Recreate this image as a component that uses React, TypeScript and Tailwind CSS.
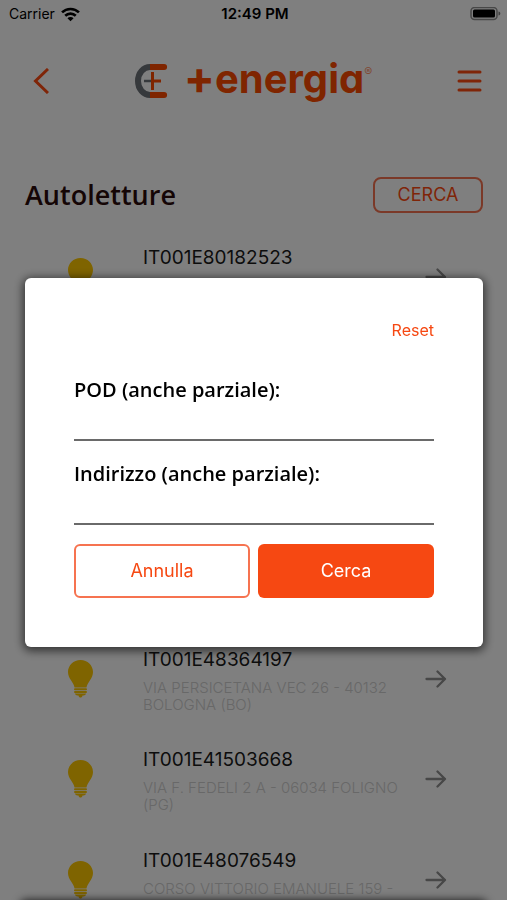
import { useState } from "react";

interface Supply {
  pod: string;
  address?: string;
}

const supplies: Supply[] = [
  { pod: "IT001E80182523" },
  { pod: "IT001E80182524" },
  { pod: "IT001E80182525" },
  { pod: "IT001E80182526" },
  { pod: "IT001E48364197", address: "VIA PERSICETANA VEC 26 - 40132 BOLOGNA (BO)" },
  { pod: "IT001E41503668", address: "VIA F. FEDELI 2 A - 06034 FOLIGNO (PG)" },
  { pod: "IT001E48076549", address: "CORSO VITTORIO EMANUELE 159 -" },
];

const BulbIcon = () => (
  <svg width="25" height="38" viewBox="0 0 25 38" fill="#ffc800">
    <path d="M12.500 0C5.400 0 0 5.500 0 12c0 3.400 1.400 5.700 3 8.300 1.700 2.700 3.200 4.700 3.500 7.200h12c.3-2.500 1.800-4.500 3.500-7.200 1.600-2.600 3-4.900 3-8.300C25 5.500 19.600 0 12.500 0z" />
    <rect x="6" y="28.300" width="13" height="2" rx="1" />
    <rect x="6" y="31" width="13" height="2" rx="1" />
    <path d="M7 33.600h11c0 1.200-1 1.800-2.500 1.800h-1c-.3 1.300-1 2.200-2 2.200s-1.700-.9-2-2.200h-1C8 35.400 7 34.800 7 33.600z" />
  </svg>
);

const ArrowIcon = () => (
  <svg width="22" height="18" viewBox="0 0 22 18" fill="none" stroke="#8f8f8f" strokeWidth="2.300" strokeLinecap="round" strokeLinejoin="round">
    <path d="M1.500 9h18.500M12.500 1.500L20 9l-7.500 7.500" />
  </svg>
);

const StatusBar = () => (
  <div className="grid grid-cols-3 items-center h-7 pl-[9px] pr-1.5 text-black">
    <div className="flex items-center gap-1.5 text-sm">
      <span>Carrier</span>
      <svg width="19" height="15" viewBox="0 0 18 14" fill="none" stroke="#000" strokeWidth="2.500">
        <path d="M1 5a11.500 11.500 0 0 1 16 0M4 8.200a7.200 7.200 0 0 1 10 0" />
        <path d="M9 13.500l-2.900-3a4.100 4.100 0 0 1 5.800 0z" fill="#000" stroke="none" />
      </svg>
    </div>
    <div className="text-center text-[15px] font-semibold">12:49 PM</div>
    <svg className="justify-self-end" width="31" height="15" viewBox="0 0 31 15">
      <rect x="1" y="0.500" width="26" height="12" rx="3.500" fill="none" stroke="#909090" strokeWidth="1.500" />
      <rect x="3" y="2.500" width="22" height="8" rx="1.500" fill="#000" />
      <path d="M28.500 4.500c1.300.3 1.800 1 1.800 2s-.5 1.700-1.800 2z" fill="#808080" />
    </svg>
  </div>
);

const Header = () => (
  <header className="flex items-center justify-between px-[25px] pt-7">
    <button aria-label="Indietro" className="flex justify-center w-8">
      <svg width="16" height="26" viewBox="0 0 16 26" fill="none" stroke="#ff4b11" strokeWidth="3">
        <path d="M15 1L2.500 13 15 25" />
      </svg>
    </button>
    <div className="flex items-center gap-4">
      <svg width="33" height="36" viewBox="0 0 33 36" fill="none" strokeWidth="6">
        <path d="M15 4C8.500 4 3 10 3 18s5.500 14 12 14" stroke="#6d7278" />
        <path d="M29 4h.1M29 32h.1" stroke="#ff4b00" strokeLinecap="round" />
        <path d="M15 4h14M15 32h14" stroke="#ff4b00" />
        <path d="M9 18h7" stroke="#6d7278" strokeWidth="2.500" />
        <path d="M17.500 9v18M17 18h9" stroke="#ff4b00" strokeWidth="3" />
      </svg>
      <div className="flex pb-1 text-[#ff4b00]">
        <span className="text-[46px] leading-[42px] font-bold">+</span>
        <span className="text-[40px] leading-[46px] font-bold [font-feature-settings:'cv11']">energia</span>
        <span className="pt-2 text-xs opacity-60">®</span>
      </div>
    </div>
    <button aria-label="Menu" className="flex justify-end w-8">
      <svg width="25" height="24" viewBox="0 0 25 24" stroke="#ff4b11" strokeWidth="3" strokeLinecap="round">
        <path d="M2 3h21M2 12h21M2 21h21" />
      </svg>
    </button>
  </header>
);

const SupplyRow = ({ pod, address }: Supply) => (
  <li className="flex min-h-[100px] even:min-h-[101px] items-start pl-[68px] pr-[60px]">
    <div className="pt-3">
      <BulbIcon />
    </div>
    <div className="ml-[50px] w-[264px]">
      <h2 className="text-[19px] leading-6 text-[#1a1a1a]">{pod}</h2>
      {address && <p className="mt-[7px] text-[15px] leading-[17px] font-light text-[#d0d0d0]">{address}</p>}
    </div>
    <button aria-label={"Apri " + pod} className="ml-auto pt-[22px]">
      <ArrowIcon />
    </button>
  </li>
);

interface FieldProps {
  id: string;
  label: string;
  value: string;
  onChange: (value: string) => void;
}

const Field = ({ id, label, value, onChange }: FieldProps) => (
  <div className="flex flex-col mb-[19px]">
    <label htmlFor={id} className="font-['Open_Sans',sans-serif] text-xl leading-7 font-[550] text-black">
      {label}
    </label>
    <input
      id={id}
      value={value}
      onChange={(e) => onChange(e.target.value)}
      className="h-[37px] border-b-2 border-[#6a6a6a] outline-none"
    />
  </div>
);

const SearchDialog = () => {
  const [pod, setPod] = useState("");
  const [street, setStreet] = useState("");

  const reset = () => {
    setPod("");
    setStreet("");
  };

  return (
    <div className="fixed inset-0 flex items-center bg-black/50 pl-[25px] pr-6 pt-[25px]">
      <form role="dialog" onSubmit={(e) => e.preventDefault()} className="flex flex-col w-full rounded-md bg-white px-[49px] pt-10 pb-[49px] shadow-[0_2px_10px_2px_rgba(0,0,0,0.6)]">
        <button type="button" onClick={reset} className="self-end mb-[34px] text-base leading-6 text-[#f64812]">
          Reset
        </button>
        <Field id="pod" label="POD (anche parziale):" value={pod} onChange={setPod} />
        <Field id="street" label="Indirizzo (anche parziale):" value={street} onChange={setStreet} />
        <div className="grid grid-cols-2 gap-2">
          <button type="button" className="h-[54px] rounded-md border-2 border-[#f67350] text-lg text-[#f64812]">
            Annulla
          </button>
          <button type="submit" className="h-[54px] rounded-md bg-[#f64812] text-lg text-white">
            Cerca
          </button>
        </div>
      </form>
    </div>
  );
};

export default function App() {
  return (
    <div className="relative h-screen overflow-hidden bg-white font-['Inter',sans-serif]">
      <StatusBar />
      <Header />
      <div className="flex items-center justify-between pl-[25px] pr-6 pt-[71px]">
        <h1 className="font-['Open_Sans',sans-serif] text-[27px] leading-9 font-semibold text-[#2a0a0a]">Autoletture</h1>
        <button className="h-9 w-[110px] rounded-lg border-2 border-[#f67350] text-lg text-[#ff4b11]">CERCA</button>
      </div>
      <ul className="pt-[33px]">
        {supplies.map((supply) => (
          <SupplyRow key={supply.pod} {...supply} />
        ))}
      </ul>
      <SearchDialog />
      {/* bottom sheet, closed */}
      <div className="absolute top-full inset-x-5 h-10 rounded-md bg-white shadow-[0_0_8px_rgba(0,0,0,0.8)]" />
    </div>
  );
}
